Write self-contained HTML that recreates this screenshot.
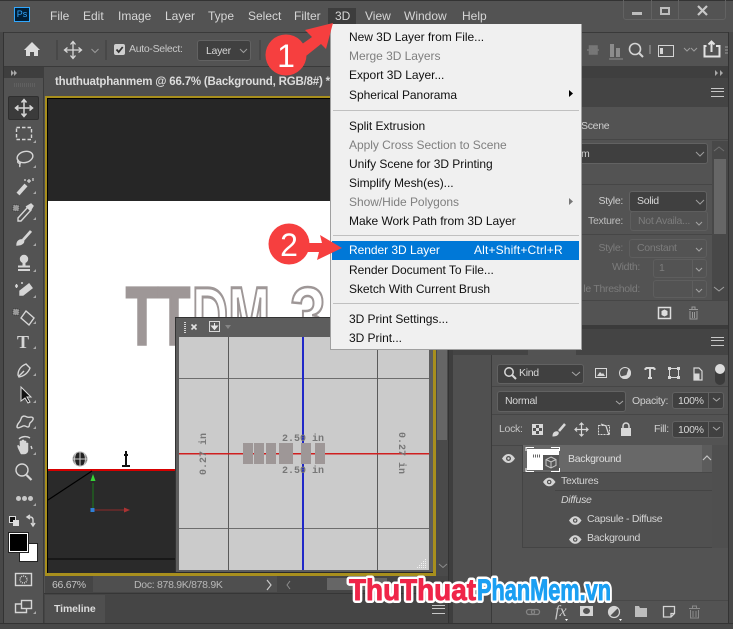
<!DOCTYPE html>
<html><head><meta charset="utf-8"><style>
html,body{margin:0;padding:0;width:733px;height:629px;overflow:hidden;background:#3c3c3c}
body{position:relative;font-family:"Liberation Sans",sans-serif;font-size:12px;color:#d6d6d6}
.b{position:absolute;box-sizing:border-box}
.t{position:absolute;white-space:nowrap;line-height:14px}
.p{font-size:10.5px;letter-spacing:-.3px}
.s{position:absolute;box-sizing:border-box;background:#404040;border:1px solid #626262;border-radius:3px}
.d{position:absolute;box-sizing:border-box;border:1px solid #5e5e5e;border-radius:3px}
.m{position:absolute;left:349px;white-space:nowrap;line-height:14px;color:#111;letter-spacing:-.04px}
.g{color:#7f7f7f}
.r{text-align:right}
.h{position:absolute;width:13px;height:7px;border-top:1px solid #c8c8c8;border-bottom:1px solid #c8c8c8}
.h:after{content:"";position:absolute;left:0;right:0;top:2px;height:1px;background:#c8c8c8}
svg{position:absolute;overflow:visible}
</style></head><body>

<!-- main shell -->
<div class="b" style="left:4px;top:0;width:725px;height:624px;background:#535353"></div>
<div class="b" style="left:0;top:0;width:4px;height:629px;background:#484848;border-right:1px solid #333"></div>
<div class="b" style="left:728px;top:0;width:5px;height:629px;background:#484848;border-left:1px solid #333"></div>
<div class="b" style="left:0;top:623px;width:733px;height:6px;background:#484848;border-top:1px solid #333"></div>
<div class="b" style="left:0;top:0;width:733px;height:1px;background:#333"></div>
<div class="b" style="left:0;top:1px;width:733px;height:31px;background:#535353"></div>
<div class="b" style="left:4px;top:32px;width:724px;height:1px;background:#3a3a3a"></div>
<div class="b" style="left:4px;top:66px;width:724px;height:1px;background:#3a3a3a"></div>

<!-- ps logo and menu -->
<div class="b" style="left:14px;top:7px;width:16px;height:15px;background:#001e36;border:1px solid #31a8ff;color:#31a8ff;font-size:9px;line-height:13px;text-align:center">Ps</div>
<div class="b" style="left:328px;top:8px;width:28px;height:16px;background:#3d3d3d"></div>
<span class="t" style="left:50px;top:9px">File</span>
<span class="t" style="left:83px;top:9px">Edit</span>
<span class="t" style="left:118px;top:9px">Image</span>
<span class="t" style="left:165px;top:9px">Layer</span>
<span class="t" style="left:208px;top:9px">Type</span>
<span class="t" style="left:248px;top:9px">Select</span>
<span class="t" style="left:294px;top:9px">Filter</span>
<span class="t" style="left:335px;top:9px">3D</span>
<span class="t" style="left:365px;top:9px">View</span>
<span class="t" style="left:404px;top:9px">Window</span>
<span class="t" style="left:462px;top:9px">Help</span>

<!-- window controls -->
<div class="b" style="left:623px;top:-4px;width:103px;height:24px;border:1px solid #626262;border-radius:3px"></div>
<div class="b" style="left:651px;top:0;width:1px;height:19px;background:#626262"></div>
<div class="b" style="left:678px;top:0;width:1px;height:19px;background:#626262"></div>
<div class="b" style="left:632px;top:12px;width:10px;height:3px;background:#bdbdbd"></div>
<div class="b" style="left:660px;top:7px;width:10px;height:8px;border:2px solid #bdbdbd"></div>
<svg style="left:0;top:0" width="733" height="40"><path d="M698 6l9 9M707 6l-9 9" stroke="#c8c8c8" stroke-width="2.2" fill="none"/></svg>

<!-- options bar -->
<svg style="left:0;top:0" width="733" height="70">
<path d="M24 50l8-8 8 8h-2v6h-4v-4h-4v4h-4v-6z" fill="#dcdcdc"/>
<path d="M57 40v20M106 40v20M260 40v20" stroke="#3d3d3d"/>
<path d="M73 42v16M65 50h16M70.500 44.500l2.500-3 2.500 3M70.500 55.500l2.500 3 2.500-3M67.500 47.500l-3 2.500 3 2.500M78.500 47.500l3 2.500-3 2.500" stroke="#d8d8d8" stroke-width="1.3" fill="none"/>
<path d="M91.500 49l3.500 3.500 3.500-3.500" stroke="#9c9c9c" fill="none"/>
<path d="M587 50h12M589.500 46h3v8h-3zM594 46h3v8h-3z" stroke="#777" stroke-width="1.500" fill="#777"/>
<path d="M609 59h14" stroke="#8c8c8c"/><path d="M610 44h4v13h-4zM616 48h4v9h-4z" fill="#8c8c8c"/>
<circle cx="635" cy="49" r="5.500" stroke="#d4d4d4" stroke-width="1.600" fill="none"/><path d="M639 53l4 4" stroke="#d4d4d4" stroke-width="2"/>
<path d="M650 45v9" stroke="#8a8a8a" stroke-width="1.500"/>
<rect x="658.500" y="45.500" width="15" height="11" stroke="#d4d4d4" fill="none"/><rect x="660" y="48" width="3" height="6" fill="#d4d4d4"/>
<path d="M684 48l3 3 3-3M691 48l3 3 3-3" stroke="#9c9c9c" fill="none"/>
<path d="M703.500 46h3M716 46h3.500v10.500h-15V46M711.500 52V42M708.500 44.500l3-3 3 3" stroke="#e2e2e2" stroke-width="2" fill="none"/>
<path d="M725 47h3M725 50h3M725 53h3" stroke="#999"/>
</svg>
<div class="b" style="left:114px;top:44px;width:11px;height:11px;background:#cfcfcf;border-radius:2px"></div>
<svg style="left:114px;top:44px" width="11" height="11"><path d="M2.500 5.500l2.200 2.500 4-5" stroke="#333" stroke-width="1.800" fill="none"/></svg>
<span class="t p" style="left:129px;top:42px;color:#c8c8c8">Auto-Select:</span>
<div class="s" style="left:197px;top:40px;width:54px;height:21px"></div>
<span class="t p" style="left:206px;top:44px">Layer</span>
<svg style="left:0;top:0" width="300" height="70"><path d="M240 49l3.500 3.500 3.500-3.500" stroke="#9c9c9c" fill="none"/></svg>

<!-- toolbar -->
<div class="b" style="left:4px;top:67px;width:40px;height:556px;background:#535353;border-right:1px solid #3c3c3c"></div>
<div class="b" style="left:4px;top:67px;width:40px;height:11px;background:#3e3e3e"></div>
<svg style="left:0;top:60px" width="46" height="40">
<path d="M11 10l3 3-3 3zM14 10l3 3-3 3z" fill="#a8a8a8"/>
<path d="M14 24h22M14 26h22" stroke="#6e6e6e" stroke-dasharray="1 1"/>
</svg>
<div class="b" style="left:8px;top:96px;width:31px;height:24px;background:#3b3b3b;border:1px solid #2f2f2f;border-radius:2px"></div>

<svg style="left:0;top:0" width="46" height="629" fill="none" stroke="#d6d6d6" stroke-width="1.400">
<!-- move -->
<path d="M24 100v16M16 108h16M21.500 102.500l2.500-3 2.500 3M21.500 113.500l2.500 3 2.500-3M18.500 105.500l-3 2.500 3 2.500M29.500 105.500l3 2.500-3 2.500" stroke-width="1.500"/>
<!-- marquee -->
<rect x="16.500" y="127.500" width="15" height="12" stroke-dasharray="3.500 2"/>
<!-- lasso -->
<ellipse cx="25" cy="157" rx="8" ry="5.500" transform="rotate(-15 25 157)"/><path d="M19 160c-3 2 0 4 1 3s-1 2 0 4"/>
<!-- wand -->
<path d="M18 194l8-9" stroke-width="4" stroke="#d6d6d6"/><path d="M29 179v4M27 181h4M24 180h2M33 178v3" stroke-width="1.200"/>
<!-- eyedropper -->
<path d="M18 218l10-11 3 3-10 11h-3z"/><path d="M26 207l5-3 2 2-3 5" fill="#d6d6d6"/>
<rect x="13" y="205" width="6" height="6" fill="#999" stroke="#222" stroke-width=".6" stroke-dasharray="1 1"/>
<!-- brush -->
<path d="M31 231l-8 9" stroke-width="2.800"/><path d="M17 245c0-3 2-6 6-5 2 2-1 5-6 5z" fill="#d6d6d6"/>
<!-- stamp -->
<circle cx="24" cy="259" r="3.500" fill="#d6d6d6"/><path d="M24 262v4" stroke-width="3"/><path d="M18 266.500h12M18 270h12" stroke-width="2"/>
<!-- eraser -->
<path d="M20 291l9-7 3 4-9 7-3 0z" fill="#d6d6d6"/><path d="M15 286h3M16.500 284v4M21 283h2"/>
<!-- bucket -->
<path d="M26 311l8 7-5 7-8-7z"/><rect x="13" y="309" width="6" height="6" fill="#999" stroke="#222" stroke-width=".6" stroke-dasharray="1 1"/>
<!-- pen -->
<path d="M18 375c0-5 3-9 8-11l4 4c-2 5-6 8-11 9z"/><path d="M19 376l5-5"/>
<!-- direct selection -->
<path d="M21 387v14l4-3 3 5 2-1-3-5h4z" fill="#111" stroke="#ddd" stroke-width="1"/>
<!-- smudge -->
<path d="M17 427c0-4 3-4 4-8s4-3 6-2 5-1 6 1-2 4-3 5 0 4-2 4-3-2-5-1-6 3-6 1z"/>
<!-- hand -->
<path d="M20 452c-2-4-3-6-2-7l2 2v-6h2v4-5h2v5-4h2v4-2h2v7c0 3-2 4-4 4h-3z" fill="#d6d6d6" stroke-width=".5"/>
<path d="M19 439c3-3 8-3 11-1M31 446l1 3" />
<!-- zoom -->
<circle cx="22" cy="470" r="6"/><path d="M26.500 475l5 5" stroke-width="2.200"/>
<!-- swap -->
<path d="M27 517h3c2 0 3 1 3 3v5M30 515l-3 2 3 2M31 523l2 3 2-3" stroke-width="1.400"/>
<!-- quick mask -->
<rect x="15.500" y="573.500" width="16" height="12"/><circle cx="23.500" cy="579.500" r="3.500" stroke-dasharray="1 1"/>
<!-- screen mode -->
<rect x="21.500" y="600.500" width="10" height="8"/><path d="M21 604h-5.500v8.500h11v-3.500"/>
<!-- flyout corners -->
<path d="M36 140v3h-3zM36 165v3h-3zM36 191v3h-3zM36 217v3h-3zM36 243v3h-3zM36 269v3h-3zM36 295v3h-3zM36 321v3h-3zM36 346v3h-3zM36 373v3h-3zM36 400v3h-3zM36 426v3h-3zM36 452v3h-3zM36 503v3h-3zM36 611v3h-3z" fill="#a8a8a8" stroke="none"/>
</svg>
<!-- T tool real text -->
<span class="t" style="left:17px;top:332px;font:bold 18px/20px 'Liberation Serif',serif;color:#d6d6d6">T</span>
<div class="b" style="left:16px;top:496px;width:5px;height:5px;background:#c8c8c8;border-radius:50%"></div>
<div class="b" style="left:22px;top:496px;width:5px;height:5px;background:#c8c8c8;border-radius:50%"></div>
<div class="b" style="left:28px;top:496px;width:5px;height:5px;background:#c8c8c8;border-radius:50%"></div>
<div class="b" style="left:9px;top:516px;width:7px;height:7px;background:#111;border:1px solid #ddd"></div>
<div class="b" style="left:13px;top:520px;width:6px;height:6px;background:#ddd"></div>
<div class="b" style="left:19px;top:543px;width:19px;height:19px;background:#fff;border:1px solid #222"></div>
<div class="b" style="left:9px;top:533px;width:19px;height:19px;background:#000;border:1px solid #fff;outline:1px solid #222"></div>

<!-- doc tab -->
<div class="b" style="left:44px;top:67px;width:408px;height:29px;background:#4f4f4f"></div>
<span class="t" style="left:55px;top:75px;font-weight:bold;color:#dcdcdc;font-size:11.500px;letter-spacing:-.2px">thuthuatphanmem @ 66.7% (Background, RGB/8#) *</span>

<!-- canvas frame -->
<div class="b" style="left:45px;top:96px;width:391px;height:480px;background:#000;border:2px solid #a88f1d;border-width:2px 3px 3px 2px"></div>
<div class="b" style="left:48px;top:99px;width:385px;height:102px;background:#262626"></div>
<div class="b" style="left:48px;top:201px;width:385px;height:268px;background:#fff"></div>
<div class="b" style="left:48px;top:469px;width:385px;height:2px;background:#d60000"></div>
<div class="b" style="left:48px;top:471px;width:385px;height:102px;background:#2a2a2a"></div>
<div class="b" style="left:48px;top:558px;width:385px;height:2px;background:#181818"></div>

<!-- 3d title as real text -->
<svg style="left:0;top:0" width="733" height="629">
<text x="126" y="344" font-family="Liberation Sans" font-weight="bold" font-size="82" fill="#9e9797" stroke="#9e9797" stroke-width="3" textLength="64" lengthAdjust="spacingAndGlyphs">TT</text>
<text x="192" y="344" font-family="Liberation Sans" font-weight="bold" font-size="82" fill="#fff" stroke="#9e9797" stroke-width="3" textLength="78" lengthAdjust="spacingAndGlyphs">DM</text>
<text x="290" y="344" font-family="Liberation Sans" font-weight="bold" font-size="82" fill="#fff" stroke="#9e9797" stroke-width="2.500" textLength="36" lengthAdjust="spacingAndGlyphs">3</text>
<!-- gizmo -->
<circle cx="80" cy="459" r="7" fill="#222" stroke="#aaa"/><path d="M73 459h14M80 452v14M76 453c-2 4-2 8 0 12M84 453c2 4 2 8 0 12" stroke="#ccc" fill="none"/>
<path d="M126 451v14M122 466h8M124 455h4" stroke="#111" stroke-width="2"/><path d="M126 451l-2 5h4z" fill="#111"/>
<path d="M48 500l44-29" stroke="#000" stroke-width="1.200"/>
<path d="M93 483v27" stroke="#1b7a1b"/><path d="M93 474l-2.500 7h5z" fill="#37d437"/>
<path d="M93 510h32" stroke="#8f2b2b"/><path d="M130 510l-6-2.500v5z" fill="#a33"/>
<rect x="90.500" y="508" width="4" height="4" fill="#2f7fd6"/>
</svg>

<!-- floating 3D panel -->
<div class="b" style="left:175px;top:317px;width:258px;height:255px;background:#5d5d5d;border-top:1px solid #333;border-left:1px solid #333"></div>
<div class="b" style="left:179px;top:337px;width:250px;height:233px;background:#cbcbcb"></div>
<svg style="left:0;top:0" width="733" height="629">
<path d="M185 322v11" stroke="#d4d4d4" stroke-dasharray="1 1" stroke-width="2"/>
<path d="M191.500 324.500l5 5M196.500 324.500l-5 5" stroke="#e2e2e2" stroke-width="1.600"/>
<rect x="209.500" y="321.500" width="10" height="10" fill="#5d5d5d" stroke="#d8d8d8"/><path d="M214.500 323v4M211.500 326h6l-3 3.500z" stroke="#e8e8e8" fill="#e8e8e8"/>
<path d="M225 325l3 4 3-4z" fill="#858585"/>
<path d="M179 378.500h250M179 528.500h250" stroke="#6d6d6d"/>
<path d="M228.500 337v233M377.500 337v233" stroke="#5a5a5a"/>
<rect x="302" y="337" width="2" height="233" fill="#2028c8"/>
<rect x="179" y="453" width="250" height="1.500" fill="#cf1f1f"/>
<g fill="#9e9797"><rect x="243" y="443" width="10" height="21"/><rect x="254" y="443" width="10" height="21"/><rect x="266" y="443" width="10" height="21"/><rect x="279" y="443" width="14" height="21"/><rect x="301" y="443" width="10" height="21"/><rect x="315" y="443" width="10" height="21"/></g>
<g font-family="Liberation Mono" font-weight="bold" font-size="10" fill="#777">
<text x="282" y="441">2.50 in</text>
<text x="282" y="473">2.50 in</text>
<text transform="translate(206,475) rotate(-90)">0.27 in</text>
<text transform="translate(399,432) rotate(90)">0.27 in</text>
</g>
<g fill="#f2f2f2"><rect x="425" y="559" width="1" height="1"/><rect x="423" y="561" width="1" height="1"/><rect x="425" y="561" width="1" height="1"/><rect x="421" y="563" width="1" height="1"/><rect x="423" y="563" width="1" height="1"/><rect x="425" y="563" width="1" height="1"/><rect x="419" y="565" width="1" height="1"/><rect x="421" y="565" width="1" height="1"/><rect x="423" y="565" width="1" height="1"/><rect x="425" y="565" width="1" height="1"/><rect x="417" y="567" width="1" height="1"/><rect x="419" y="567" width="1" height="1"/><rect x="421" y="567" width="1" height="1"/><rect x="423" y="567" width="1" height="1"/><rect x="425" y="567" width="1" height="1"/></g>
</svg>

<!-- doc scrollbar -->
<div class="b" style="left:436px;top:96px;width:12px;height:480px;background:#4a4a4a"></div>
<div class="b" style="left:437px;top:98px;width:10px;height:342px;background:#666"></div>
<svg style="left:0;top:0" width="733" height="629"><path d="M439 564l4 3.500 4-3.500" stroke="#8c8c8c" fill="none"/></svg>

<!-- status -->
<div class="b" style="left:45px;top:576px;width:403px;height:17px;background:#454545"></div>
<div class="b" style="left:93px;top:576px;width:184px;height:16px;background:#4f4f4f"></div>
<span class="t p" style="left:52px;top:578px;color:#c4c4c4">66.67%</span>
<span class="t p" style="left:134px;top:578px;color:#b8b8b8">Doc: 878.9K/878.9K</span>
<svg style="left:0;top:0" width="733" height="629"><path d="M267 580l4 5-4 5" stroke="#c8c8c8" fill="none" stroke-width="1.200"/><path d="M290 581l-3 4 3 4" stroke="#8c8c8c" fill="none"/></svg>
<div class="b" style="left:327px;top:578px;width:60px;height:12px;background:#666"></div>

<!-- timeline panel -->
<div class="b" style="left:44px;top:593px;width:408px;height:30px;background:#454545;border-top:1px solid #363636"></div>
<div class="b" style="left:45px;top:595px;width:60px;height:28px;background:#4f4f4f"></div>
<span class="t" style="left:54px;top:602px;font-weight:bold;font-size:10.5px;letter-spacing:-.1px;color:#dcdcdc">Timeline</span>
<div class="h" style="left:432px;top:605px"></div>

<!-- panel columns -->
<div class="b" style="left:448px;top:67px;width:5px;height:556px;background:#3e3e3e;border-left:1px solid #333"></div>
<div class="b" style="left:453px;top:67px;width:38px;height:556px;background:#505050"></div>
<div class="b" style="left:491px;top:67px;width:237px;height:556px;background:#535353;border-left:1px solid #3a3a3a"></div>
<div class="b" style="left:453px;top:66px;width:275px;height:12px;background:#3f3f3f"></div>
<svg style="left:0;top:0" width="733" height="629"><path d="M715 70l3 3-3 3zM720 70l3 3-3 3z" fill="#a8a8a8"/></svg>
<div class="b" style="left:453px;top:78px;width:275px;height:29px;background:#444"></div>
<div class="h" style="left:711px;top:88px"></div>
<div class="b" style="left:453px;top:107px;width:275px;height:33px;background:#535353;border-bottom:1px solid #464646"></div>
<span class="t p" style="left:581px;top:119px;color:#cfcfcf">Scene</span>
<div class="s" style="left:570px;top:143px;width:138px;height:21px;background:#3f3f3f"></div>
<span class="t p" style="left:581px;top:147px;color:#cfcfcf">m</span>
<div class="b" style="left:570px;top:165px;width:142px;height:20px;border-bottom:1px solid #464646"></div>
<div class="b" style="left:712px;top:141px;width:16px;height:159px;background:#484848"></div>
<div class="b" style="left:714px;top:159px;width:12px;height:75px;background:#666"></div>
<span class="t p r" style="right:110px;top:194px;color:#cfcfcf">Style:</span>
<div class="s" style="left:629px;top:191px;width:78px;height:21px"></div>
<span class="t p" style="left:637px;top:194px;color:#d8d8d8">Solid</span>
<span class="t p r" style="right:110px;top:214px;color:#bdbdbd">Texture:</span>
<div class="d" style="left:630px;top:211px;width:78px;height:20px"></div>
<span class="t p" style="left:638px;top:214px;color:#7c7c7c">Not Availa...</span>
<div class="b" style="left:570px;top:234px;width:142px;height:1px;background:#464646"></div>
<span class="t p r" style="right:110px;top:241px;color:#7c7c7c">Style:</span>
<div class="d" style="left:629px;top:239px;width:78px;height:19px"></div>
<span class="t p" style="left:637px;top:241px;color:#7c7c7c">Constant</span>
<span class="t p r" style="right:93px;top:260px;color:#7c7c7c">Width:</span>
<div class="d" style="left:653px;top:259px;width:54px;height:19px"></div>
<div class="b" style="left:692px;top:259px;width:1px;height:19px;background:#5e5e5e"></div>
<span class="t p" style="left:659px;top:261px;color:#7c7c7c">1</span>
<span class="t p r" style="right:93px;top:282px;color:#7c7c7c">le Threshold:</span>
<div class="d" style="left:653px;top:280px;width:54px;height:18px"></div>
<div class="b" style="left:692px;top:280px;width:1px;height:18px;background:#5e5e5e"></div>
<div class="b" style="left:453px;top:300px;width:275px;height:1px;background:#464646"></div>
<div class="b" style="left:453px;top:325px;width:275px;height:4px;background:#3b3b3b"></div>
<div class="b" style="left:453px;top:329px;width:275px;height:26px;background:#444"></div>
<div class="b" style="left:528px;top:340px;width:48px;height:15px;background:#535353"></div>
<div class="h" style="left:711px;top:337px"></div>
<svg style="left:0;top:0" width="733" height="629" fill="none">
<path d="M714 151l5-4 5 4" stroke="#707070"/>
<path d="M696 152l4 4 4-4M696 200l4 4 4-4M696 222l3 3 3-3M696 248l3 3 3-3M696 268l3 3 3-3M696 289l3 3 3-3M714 287l5 4 5-4" stroke="#bdbdbd" opacity=".75"/>
<rect x="658.500" y="307.500" width="12" height="11" stroke="#ddd" stroke-width="1.500"/><path d="M664.500 309.500l3 1.500v4l-3 1.500-3-1.500v-4z" fill="#ddd"/>
<path d="M689 309.500h9M692 309v-2h3v2M690 311v8h7v-8M692.500 312v6M694.500 312v6" stroke="#999"/>
</svg>

<!-- layers panel -->
<div class="s" style="left:497px;top:364px;width:87px;height:20px"></div>
<svg style="left:0;top:0" width="733" height="629" fill="none" stroke="#d8d8d8">
<circle cx="509" cy="372" r="4.200" stroke-width="1.500"/><path d="M512 375l4 4" stroke-width="2"/>
<path d="M572 372l4 3.500 4-3.500" stroke="#a8a8a8"/>
<rect x="595.500" y="368.500" width="11" height="9"/><path d="M597 376l3-4 2 2 1-1 2 3z" fill="#d8d8d8" stroke="none"/>
<circle cx="625" cy="373" r="5.500"/><path d="M625 367.500a5.500 5.500 0 010 11l3-5z" fill="#d8d8d8" transform="rotate(45 625 373)"/>
<path d="M645.500 368h9M650 368v10M648 378h4M645.500 368v2M654.500 368v2" stroke-width="2"/>
<rect x="669.500" y="368.500" width="9" height="9"/><path d="M668 367h3v3h-3zM677 367h3v3h-3zM668 376h3v3h-3zM677 376h3v3h-3z" fill="#d8d8d8" stroke="none"/>
<path d="M694 374v-6h5l3 3v9h-8z" stroke-width="1.200"/><rect x="694" y="374" width="5" height="6" fill="#d8d8d8"/>
</svg>
<span class="t p" style="left:519px;top:366px;color:#d8d8d8">Kind</span>
<div class="b" style="left:715px;top:365px;width:10px;height:20px;background:#3b3b3b;border-radius:5px"></div>
<div class="b" style="left:715px;top:364px;width:10px;height:10px;background:#dcdcdc;border-radius:50%"></div>
<div class="b" style="left:492px;top:386px;width:236px;height:1px;background:#464646"></div>
<div class="s" style="left:497px;top:391px;width:129px;height:21px"></div>
<span class="t p" style="left:505px;top:394px;color:#d8d8d8">Normal</span>
<span class="t p" style="left:632px;top:394px;color:#cfcfcf">Opacity:</span>
<div class="s" style="left:672px;top:392px;width:52px;height:17px"></div>
<div class="b" style="left:708px;top:392px;width:1px;height:17px;background:#626262"></div>
<span class="t p" style="left:678px;top:394px;color:#d8d8d8">100%</span>
<div class="b" style="left:492px;top:414px;width:236px;height:1px;background:#464646"></div>
<span class="t p" style="left:499px;top:422px;color:#c4c4c4">Lock:</span>
<svg style="left:0;top:0" width="733" height="629" fill="none" stroke="#d8d8d8">
<rect x="532.500" y="424.500" width="10" height="10" stroke-width="1"/><path d="M533 425h3v3h-3zM539 425h3v3h-3zM536 428h3v3h-3zM533 431h3v3h-3zM539 431h3v3h-3z" fill="#d8d8d8" stroke="none"/>
<path d="M565 424l-6 7" stroke-width="2.500"/><path d="M553 436c0-3 2-5 5-4 1 2-1 4-5 4z" fill="#d8d8d8"/>
<path d="M581.500 423v13M575 429.500h13M579.500 425l2-2 2 2M579.500 434l2 2 2-2M577 427.500l-2 2 2 2M586 427.500l2 2-2 2" stroke-width="1.200"/>
<rect x="598.500" y="425.500" width="11" height="9" stroke-dasharray="2 1"/><path d="M601 424l5 2 3 9" stroke-width="1.200"/>
<path d="M623 428v-2a3 3 0 016 0v2" stroke-width="1.500"/><rect x="621" y="428" width="10" height="8" fill="#d8d8d8" stroke="none"/>
</svg>
<span class="t p" style="left:654px;top:422px;color:#cfcfcf">Fill:</span>
<div class="s" style="left:672px;top:421px;width:52px;height:17px"></div>
<div class="b" style="left:708px;top:421px;width:1px;height:17px;background:#626262"></div>
<span class="t p" style="left:678px;top:423px;color:#d8d8d8">100%</span>
<svg style="left:0;top:0" width="733" height="629" fill="none"><path d="M616 401l3.500 3 3.500-3M713 398l3.500 3 3.500-3M713 427l3.500 3 3.500-3" stroke="#a8a8a8"/></svg>
<div class="b" style="left:492px;top:445px;width:236px;height:1px;background:#464646"></div>

<div class="b" style="left:712px;top:445px;width:16px;height:103px;background:#4f4f4f"></div>
<div class="b" style="left:523px;top:445px;width:189px;height:27px;background:#686868"></div>
<div class="b" style="left:702px;top:445px;width:10px;height:27px;background:#5c5c5c"></div>
<div class="b" style="left:522px;top:472px;width:190px;height:76px;background:#505050;border-bottom:1px solid #444"></div>
<div class="b" style="left:522px;top:445px;width:1px;height:103px;background:#444"></div>
<div class="b" style="left:555px;top:490px;width:157px;height:1px;background:#444"></div>
<div class="b" style="left:523px;top:472px;width:189px;height:1px;background:#484848"></div>
<!-- thumb -->
<div class="b" style="left:527px;top:449px;width:32px;height:21px;background:#fff"></div>
<div class="b" style="left:543px;top:455px;width:16px;height:15px;background:#555"></div>
<svg style="left:0;top:0" width="733" height="629" fill="none">
<path d="M526 451v-3.500h8M551 447.500h8.500v3.500M526 468v3.500h8M551 471.500h8.500v-3.500" stroke="#fff"/>
<path d="M533 456h1M535 456h1M537 456h1M539 456h1" stroke="#666" stroke-width="3"/>
<path d="M551 457l5 2.500v6l-5 2.500-5-2.500v-6zM546 459.500l5 2.500 5-2.500M551 462v6" stroke="#c8c8c8"/>
<path d="M703 460l4-4 4 4" stroke="#c4c4c4" stroke-width="1.200"/>
<g fill="#d4d4d4">
<path d="M502 458.500c2-3 4-4.500 6.500-4.500s4.500 1.500 6.500 4.500c-2 3-4 4.500-6.500 4.500s-4.500-1.500-6.500-4.500z"/>
<path d="M543 482c2-3 3.800-4.300 6.200-4.300s4.300 1.300 6.300 4.300c-2 3-3.900 4.300-6.300 4.300s-4.200-1.300-6.200-4.300z"/>
<path d="M569 520.500c2-3 3.800-4.300 6.200-4.300s4.300 1.300 6.300 4.300c-2 3-3.900 4.300-6.300 4.300s-4.200-1.300-6.200-4.300z"/>
<path d="M569 539.500c2-3 3.800-4.300 6.200-4.300s4.300 1.300 6.300 4.300c-2 3-3.900 4.300-6.300 4.300s-4.200-1.300-6.200-4.300z"/>
</g>
<g fill="#505050"><circle cx="508.500" cy="458.500" r="2.500"/><circle cx="549.200" cy="482" r="2.300"/><circle cx="575.200" cy="520.500" r="2.300"/><circle cx="575.200" cy="539.500" r="2.300"/></g>
<g fill="#d4d4d4"><circle cx="508.500" cy="458.500" r="1.200"/><circle cx="549.200" cy="482" r="1.100"/><circle cx="575.200" cy="520.500" r="1.100"/><circle cx="575.200" cy="539.500" r="1.100"/></g>
</svg>
<span class="t p" style="left:568px;top:452px;color:#dedede">Background</span>
<span class="t p" style="left:561px;top:474px;color:#d4d4d4">Textures</span>
<span class="t p" style="left:561px;top:493px;font-style:italic;color:#d4d4d4">Diffuse</span>
<span class="t p" style="left:587px;top:512px;color:#d4d4d4">Capsule - Diffuse</span>
<span class="t p" style="left:587px;top:531px;color:#d4d4d4">Background</span>

<!-- layers footer -->
<div class="b" style="left:492px;top:600px;width:236px;height:1px;background:#484848"></div>
<svg style="left:0;top:0" width="733" height="629" fill="none">
<rect x="526.500" y="609.500" width="8" height="5" rx="2.500" stroke="#858585" stroke-width="1.300"/><rect x="531.500" y="609.500" width="8" height="5" rx="2.500" stroke="#858585" stroke-width="1.300"/>
<rect x="580" y="606" width="13" height="10" fill="#d4d4d4"/><ellipse cx="586.500" cy="611" rx="3.500" ry="3" fill="#535353"/>
<circle cx="614" cy="612" r="5.500" stroke="#d4d4d4" stroke-width="1.200"/><path d="M610 616a5.500 5.500 0 018-8z" fill="#d4d4d4"/>
<path d="M635 606h4l1 2h7v9h-12z" fill="#bdbdbd"/>
<path d="M663.500 606.500h11v7l-3.500 3.500h-7.500zM671 617v-3.500h3.500" stroke="#d4d4d4" stroke-width="1.300"/>
<path d="M689 608.500h11M692.500 608v-2h4v2M690.500 610v8h8v-8M693 611v6M696 611v6" stroke="#8a8a8a"/>
<path d="M565 619h3l-1.500 2zM619 619h3l-1.500 2z" fill="#fff"/>
</svg>
<span class="t" style="left:555px;top:603px;font:italic 16px/18px 'Liberation Serif',serif;color:#c8c8c8">fx</span>

<!-- 3D menu -->
<div class="b" style="left:330px;top:24px;width:252px;height:326px;background:#f0f0f0;border:1px solid #a0a0a0;border-top:0"></div>
<div class="b" style="left:333px;top:110px;width:246px;height:1px;background:#c0c0c0"></div>
<div class="b" style="left:333px;top:235px;width:246px;height:1px;background:#c0c0c0"></div>
<div class="b" style="left:333px;top:303px;width:246px;height:1px;background:#c0c0c0"></div>
<div class="b" style="left:332px;top:241px;width:247px;height:19px;background:#0078d7"></div>
<span class="m" style="top:30px">New 3D Layer from File...</span>
<span class="m g" style="top:49px">Merge 3D Layers</span>
<span class="m" style="top:68px">Export 3D Layer...</span>
<span class="m" style="top:88px">Spherical Panorama</span>
<span class="m" style="top:119px">Split Extrusion</span>
<span class="m g" style="top:138px">Apply Cross Section to Scene</span>
<span class="m" style="top:157px">Unify Scene for 3D Printing</span>
<span class="m" style="top:176px">Simplify Mesh(es)...</span>
<span class="m g" style="top:195px">Show/Hide Polygons</span>
<span class="m" style="top:214px">Make Work Path from 3D Layer</span>
<span class="m" style="top:243px;color:#fff">Render 3D Layer</span>
<span class="m" style="top:243px;left:474px;color:#fff;letter-spacing:.15px">Alt+Shift+Ctrl+R</span>
<span class="m" style="top:263px">Render Document To File...</span>
<span class="m" style="top:282px">Sketch With Current Brush</span>
<span class="m" style="top:312px">3D Print Settings...</span>
<span class="m" style="top:331px">3D Print...</span>
<svg style="left:0;top:0" width="733" height="629"><path d="M569 90l4 3.500-4 3.500z" fill="#000"/><path d="M569 198l4 3.500-4 3.500z" fill="#777"/></svg>

<!-- annotations -->
<svg style="left:0;top:0" width="733" height="629">
<path d="M333 23L305 30l7 7-14 10 8 9 15-12 5 5z" fill="#f63f3f"/>
<circle cx="286" cy="55" r="20.500" fill="#f63f3f"/>
<path d="M300 243h22l-2-8 22 13-25 12 2-8h-19z" fill="#f63f3f"/>
<circle cx="289" cy="244" r="20.500" fill="#f63f3f"/>
<text x="286" y="67" text-anchor="middle" font-family="Liberation Sans" font-size="32" fill="#fff">1</text>
<text x="289" y="256" text-anchor="middle" font-family="Liberation Sans" font-size="32" fill="#fff">2</text>
</svg>

<!-- watermark -->
<svg style="left:0;top:0" width="733" height="629">
<g font-family="Liberation Sans" font-weight="bold" font-size="30" stroke-linejoin="round">
<text x="349" y="600" fill="#fff" stroke="#fff" stroke-width="6" textLength="127" lengthAdjust="spacingAndGlyphs">ThuThuat</text>
<text x="477" y="600" fill="#fff" stroke="#fff" stroke-width="6" textLength="134" lengthAdjust="spacingAndGlyphs">PhanMem.vn</text>
<text x="349" y="600" fill="#ef2549" stroke="#ef2549" stroke-width=".9" textLength="127" lengthAdjust="spacingAndGlyphs">ThuThuat</text>
<text x="477" y="600" fill="#1b9ff2" stroke="#1b9ff2" stroke-width=".9" textLength="134" lengthAdjust="spacingAndGlyphs">PhanMem.vn</text>
</g>
</svg>
</body></html>
